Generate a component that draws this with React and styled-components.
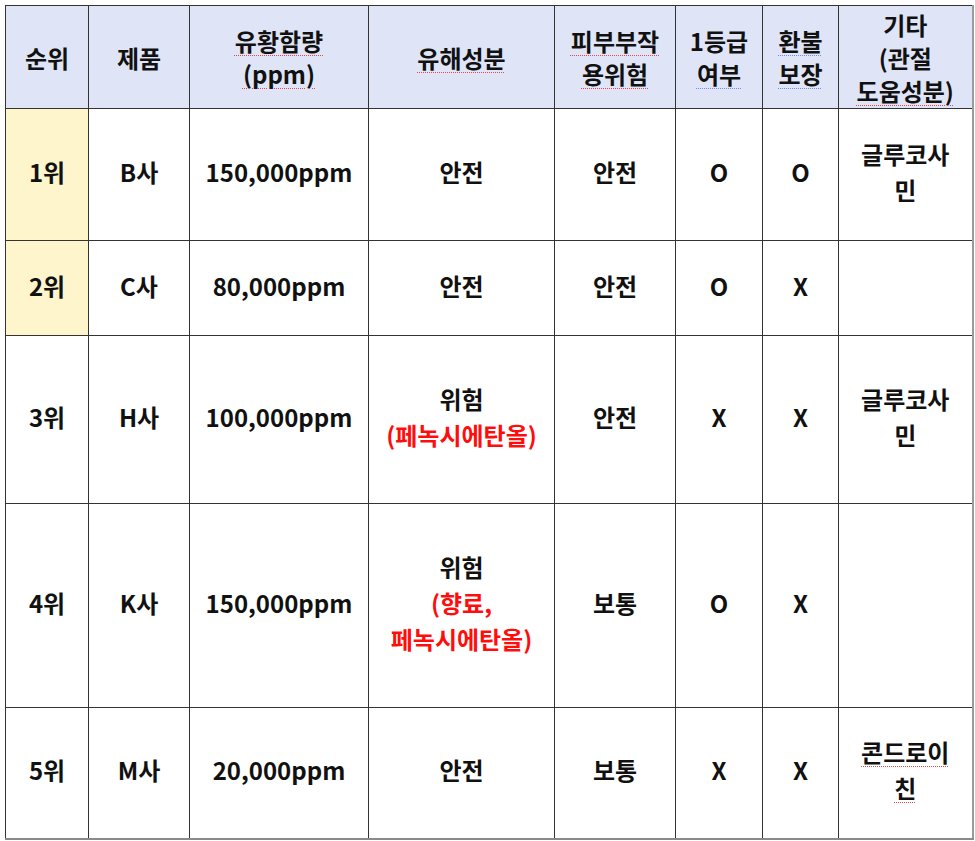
import React from "react";
import styled, { createGlobalStyle } from "styled-components";

const GlobalStyle = createGlobalStyle`
  html, body {
    margin: 0;
    padding: 0;
    background: #ffffff;
  }
  body {
    padding: 5px 0 0 5px;
    font-family: "Noto Sans CJK KR", "Noto Sans", sans-serif;
    color: #111;
  }
`;

const Table = styled.table`
  border-collapse: collapse;
  table-layout: fixed;
  width: 967px;
  border-top: 1px solid #333;
  border-left: 1px solid #555;
  border-right: 2px solid #9a9a9a;
  border-bottom: 2px solid #8a8a8a;
  font-size: 24px;
  font-weight: 700;
  line-height: 36px;
`;

const Row = styled.tr`
  height: ${(p) => p.$h}px;
`;

const Head = styled.th`
  background: #dfe5f6;
  border: 1px solid #333;
  text-align: center;
  vertical-align: middle;
  font-weight: 700;
  line-height: 33px;
  padding: 0;
`;

const Cell = styled.td`
  background: ${(p) => (p.$top ? "#fff5cc" : "#ffffff")};
  border: 1px solid #333;
  text-align: center;
  vertical-align: middle;
  padding: 0 0 5px;
  color: #111;
`;

const Danger = styled.span`
  color: #ff0d0d;
`;

const Marked = styled.span`
  text-decoration: underline dotted;
  text-decoration-color: ${(p) => (p.$tone === "blue" ? "#6b8fe0" : "#e04848")};
  text-decoration-thickness: 1px;
  text-underline-offset: 4px;
`;

const widths = [83, 101, 179, 186, 121, 87, 76, 134];

const rows = [
  {
    h: 132,
    rank: "1위",
    top: true,
    name: "B사",
    ppm: "150,000ppm",
    harm: ["안전"],
    skin: "안전",
    grade: "O",
    refund: "O",
    etc: ["글루코사", "민"],
  },
  {
    h: 95,
    rank: "2위",
    top: true,
    name: "C사",
    ppm: "80,000ppm",
    harm: ["안전"],
    skin: "안전",
    grade: "O",
    refund: "X",
    etc: [],
  },
  {
    h: 168,
    rank: "3위",
    name: "H사",
    ppm: "100,000ppm",
    harm: ["위험"],
    danger: ["(페녹시에탄올)"],
    skin: "안전",
    grade: "X",
    refund: "X",
    etc: ["글루코사", "민"],
  },
  {
    h: 204,
    rank: "4위",
    name: "K사",
    ppm: "150,000ppm",
    harm: ["위험"],
    danger: ["(향료,", "페녹시에탄올)"],
    skin: "보통",
    grade: "O",
    refund: "X",
    etc: [],
  },
  {
    h: 131,
    rank: "5위",
    name: "M사",
    ppm: "20,000ppm",
    harm: ["안전"],
    skin: "보통",
    grade: "X",
    refund: "X",
    etc: ["콘드로이", "친"],
    marked: true,
  },
];

function Lines({ items }) {
  return items.map((t, i) => (
    <React.Fragment key={i}>
      {i > 0 && <br />}
      {t}
    </React.Fragment>
  ));
}

export default function App() {
  return (
    <>
      <GlobalStyle />
      <Table>
        <colgroup>
          {widths.map((w, i) => (
            <col key={i} style={{ width: w }} />
          ))}
        </colgroup>
        <thead>
          <Row $h={103}>
            <Head>순위</Head>
            <Head>제품</Head>
            <Head>
              <Marked>유황함량</Marked>
              <br />
              <Marked>(ppm)</Marked>
            </Head>
            <Head>
              <Marked>유해성분</Marked>
            </Head>
            <Head>
              <Marked>피부부작</Marked>
              <br />
              <Marked>용위험</Marked>
            </Head>
            <Head>
              1등급
              <br />
              <Marked $tone="blue">여부</Marked>
            </Head>
            <Head>
              <Marked $tone="blue">환불</Marked>
              <br />
              <Marked $tone="blue">보장</Marked>
            </Head>
            <Head>
              기타
              <br />
              (관절
              <br />
              <Marked>도움성분)</Marked>
            </Head>
          </Row>
        </thead>
        <tbody>
          {rows.map((r) => (
            <Row key={r.rank} $h={r.h}>
              <Cell $top={r.top}>{r.rank}</Cell>
              <Cell>{r.name}</Cell>
              <Cell>{r.ppm}</Cell>
              <Cell>
                <Lines items={r.harm} />
                {r.danger && (
                  <>
                    <br />
                    <Danger>
                      <Lines items={r.danger} />
                    </Danger>
                  </>
                )}
              </Cell>
              <Cell>{r.skin}</Cell>
              <Cell>{r.grade}</Cell>
              <Cell>{r.refund}</Cell>
              <Cell>
                {r.marked ? (
                  <>
                    <Marked>{r.etc[0]}</Marked>
                    <br />
                    <Marked>{r.etc[1]}</Marked>
                  </>
                ) : (
                  <Lines items={r.etc} />
                )}
              </Cell>
            </Row>
          ))}
        </tbody>
      </Table>
    </>
  );
}
